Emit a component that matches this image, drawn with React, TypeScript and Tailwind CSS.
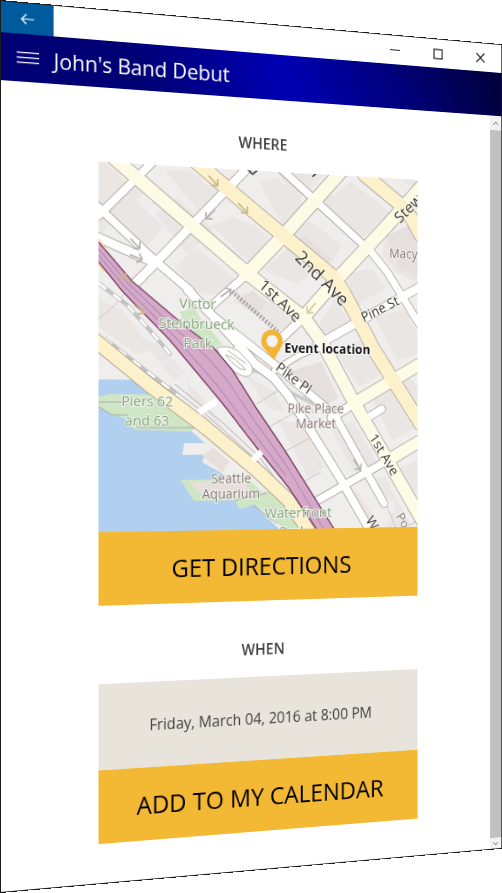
import React from "react";

type Road = { d: string; w: number; fill: string };

const WHITE = "#ffffff";
const PALE = "#fdfae6";
const YELLOW = "#fdf1cb";

const roads: Road[] = [
  { d: "M60 -5 L0 55", w: 8, fill: WHITE },
  { d: "M164 -4 L62 100 L38 124", w: 9, fill: WHITE },
  { d: "M-4 43 L62 100 L98 128 L110 143", w: 8, fill: WHITE },
  { d: "M-4 76 L58 100", w: 9, fill: WHITE },
  { d: "M96 128 L122 153 L153 184 L170 203", w: 9, fill: WHITE },
  { d: "M161 110 L122 144", w: 8, fill: WHITE },
  { d: "M202 -2 L305 81 L324 102 L362 157", w: 8, fill: WHITE },
  { d: "M242 182 L362 117", w: 9, fill: WHITE },
  { d: "M225 154 L196 180", w: 9, fill: WHITE },
  { d: "M122 153 L193 204 L262 257 L320 352", w: 8, fill: WHITE },
  { d: "M150 190 L170 203 L192 218 L208 236 L235 275 L268 324 L302 379", w: 9, fill: WHITE },
  { d: "M193 210 L222 193 L245 184", w: 6, fill: WHITE },
  { d: "M285 244 L258 260", w: 9, fill: WHITE },
  { d: "M296 262 L317 250", w: 8, fill: WHITE },
  { d: "M329 303 L273 332 L256 341", w: 8, fill: WHITE },
  { d: "M222 358 L256 341", w: 8, fill: WHITE },
  { d: "M364 8 L324 51 L262 114 L225 154", w: 14, fill: PALE },
  { d: "M270 -5 L204 66 L161 110", w: 14, fill: PALE },
  { d: "M364 200 L285 244", w: 13, fill: PALE },
  { d: "M364 284 L329 303", w: 13, fill: PALE },
  { d: "M12 -8 L164 110 L227 154 L247 179 L285 244 L326 308 L366 372", w: 14, fill: PALE },
  { d: "M296 -3 L341 29 L352 41 L364 60", w: 15, fill: YELLOW },
  { d: "M106 -5 L174 46 L262 110 L273 126 L300 172 L306 183 L364 266", w: 15, fill: YELLOW },
];

const blocks = [
  "M0 0 H6 L45 31 L0 75Z",
  "M34 12 L52 26 L28 50 L10 62Z",
  "M60 50 L84 32 L124 64 L96 92Z",
  "M12 62 L40 38 L70 64 L50 86Z",
  "M72 6 L100 4 L130 30 L112 50Z",
  "M116 10 L150 12 L128 34Z",
  "M146 50 L170 58 L192 74 L166 98 L122 60Z",
  "M176 12 L196 6 L228 34 L204 60Z",
  "M196 0 L250 0 L220 30Z",
  "M280 6 L330 38 L318 52 L290 66 L228 18 L262 22Z",
  "M232 50 L270 74 L258 96 L210 70Z",
  "M206 82 L236 104 L218 118 L180 104Z",
  "M82 104 L106 84 L150 116 L130 132 L104 130Z",
  "M160 128 L192 140 L216 160 L200 166 L146 138Z",
  "M10 112 L48 130 L76 158 L50 150Z",
  "M340 0 H360 V12Z",
  "M322 62 L360 50 V112 L336 102 L318 84Z",
  "M276 106 L304 98 L322 118 L286 140Z",
  "M310 152 L344 140 L360 168 V190 L336 198Z",
  "M244 160 L262 132 L286 166 L248 176Z",
  "M264 190 L292 176 L324 208 L290 226Z",
  "M204 214 L238 210 L266 238 L250 244Z",
  "M160 216 L192 232 L206 256 L186 250Z",
  "M196 262 L222 266 L250 312 L232 326Z",
  "M258 272 L284 264 L312 308 L284 318Z",
  "M306 238 L350 216 L360 224 V270 L330 284Z",
  "M340 314 L360 304 V344Z",
  "M300 330 L320 322 L352 376 L322 378 L334 352Z",
  "M272 344 L288 338 L316 378 L304 378Z",
  "M42 176 L64 186 L94 214 L80 222Z",
  "M0 140 L24 150 L58 190 L40 196 L0 168Z",
  "M94 222 L116 244 L136 272 L98 240Z",
];

const HIGHWAY_TOP = "M0 82 L36 121 L95 167 L125 188 L145 210 L172 250 L204 294 L262 380";
const HIGHWAY_LOW = "M0 102 L26 132 L76 180 L134 245 L172 291 L208 333 L242 380";

function Arrow({ x, y, r, c }: { x: number; y: number; r: number; c: string }) {
  return (
    <path
      d="M-7 0 H6 M2 -5 L7 0 L2 5"
      transform={`translate(${x} ${y}) rotate(${r})`}
      fill="none"
      stroke={c}
      strokeWidth="1.7"
    />
  );
}

function EventMap() {
  return (
    <svg
      viewBox="0 0 360 378"
      className="block w-full"
      role="img"
      aria-label="Map of the event location"
      fontFamily='"Open Sans", "Noto Sans", sans-serif'
    >
      <rect width="360" height="378" fill="#f0eeed" />
      <g fill="#eae6e4">
        {blocks.map((d) => (
          <path key={d} d={d} />
        ))}
      </g>
      <path d="M206 82 L228 66 L258 90 L238 104Z M322 62 L360 46 V104 L338 98Z M206 212 L246 200 L266 238 L252 246Z M168 126 L184 138 L172 152 L150 138Z" fill="#e5dfdd" />
      <path
        d="M0 160 Q20 146 30 130 M112 140 L98 156 M172 246 L206 226 M186 270 L228 248 M204 296 L232 282 M222 330 L246 318 M210 206 L238 256 M322 352 L334 379 M342 379 L360 372"
        fill="none"
        stroke="#c9c5c3"
      />

      {/* Water and piers */}
      <path
        d="M0 222 H42 L54 230 L98 273 L115 287 H92 L90 299 H115 L112 307 L133 318 L150 330 L174 355 L199 379 H0Z"
        fill="#b1cfef"
      />
      <path d="M0 240 L12 237 H72 L106 271 L98 275 L38 273 L30 262 L14 258 L0 250Z" fill="#cfe6c5" />
      <path d="M88 325 H165 L178 338 L204 337 L232 356 L240 379 H204 L186 362 L170 352 L153 356 L148 347 L103 347Z" fill="#cfe6c5" />
      <path d="M98 327 H158 L172 345 L110 340Z M112 300 L124 292 L142 306 L134 318Z" fill="#e6dfdc" />
      <path d="M0 245 H26 M0 250 L14 258 H30 L42 271 H104 M148 347 L184 340 M168 352 L196 372" fill="none" stroke="#a9aca9" />
      <path d="M87 151 L103 146 L112 160 L129 177 L134 184 L122 188 L95 167Z" fill="#cfe6c5" />

      {/* Railway */}
      <g fill="none">
        <path d="M0 124 L30 145 L54 170 L78 196 M6 180 L68 225 L86 238" stroke="#c2c2c2" strokeWidth="4.5" />
        <path d="M0 124 L30 145 L54 170 L78 196 M6 180 L68 225 L86 238" stroke="#ffffff" strokeWidth="2.5" strokeDasharray="10 9" />
        <path d="M76 228 L109 252 L134 272 L176 308 M82 226 L134 265 L176 302 L206 340" stroke="#b5b1af" />
        <path d="M156 208 L176 212 L204 230 L244 248" stroke="#cccccc" strokeWidth="4" />
      </g>

      {/* Streets */}
      <g fill="none" strokeLinejoin="round" strokeLinecap="round">
        {roads.map((r) => (
          <path key={r.d} d={r.d} stroke="#b3aca5" strokeWidth={r.w + 2} />
        ))}
        {roads.map((r) => (
          <path key={r.d} d={r.d} stroke={r.fill} strokeWidth={r.w} />
        ))}
        <path d="M128 188 Q136 183 152 190 L166 204 Q172 216 160 217 Q146 214 136 203Z" stroke="#b3aca5" fill="#ffffff" />
        <path d="M138 195 Q148 196 160 210 Q150 210 138 195Z M140 190 L160 203" stroke="#b3aca5" />
        <path d="M-4 182 L54 227 L112 268 L172 315 L208 347 L234 384" stroke="#b3a391" strokeWidth="16" />
        <path d="M-4 182 L54 227 L112 268 L172 315 L208 347 L234 384" stroke={YELLOW} strokeWidth="14" />
      </g>
      <path d="M145 128 L198 170" stroke="#a8a3a0" strokeWidth="5" strokeDasharray="2 2" />
      <path d="M148 127 L201 169" stroke="#eae6e4" />

      {/* Highway */}
      <path
        d="M0 82 L36 121 L95 167 L125 188 L145 210 L172 250 L204 294 L262 380 H242 L208 333 L172 291 L134 245 L76 180 L26 132 L0 102Z"
        fill="#d6a9c8"
      />
      <g fill="none" stroke="#7d4266">
        <path d={HIGHWAY_TOP} strokeWidth="1.4" />
        <path d={HIGHWAY_LOW} strokeWidth="1.4" />
      </g>
      <g fill="none" stroke="#b391b8" strokeWidth="1.3">
        <path d="M0 89 L30 122 L88 173 L116 196 L140 222 L172 266 L206 310 L250 380" />
        <path d="M0 95 L28 127 L82 177 L128 226 L172 280 L206 322" />
      </g>
      <path d="M0 79 L8 89 M0 104 L6 112" stroke="#f0cf95" strokeWidth="1.5" />
      <path d="M108 255 L128 243 M168 305 L178 296" stroke="#ffffff" strokeWidth="7" />

      <Arrow x={124} y={13} r={45} c="#c7b68a" />
      <Arrow x={157} y={40} r={45} c="#c7b68a" />
      <Arrow x={121} y={48} r={135} c="#b5b1ae" />
      <Arrow x={39} y={82} r={45} c="#b5b1ae" />
      <Arrow x={40} y={96} r={20} c="#b5b1ae" />
      <Arrow x={138} y={130} r={-35} c="#b5b1ae" />
      <Arrow x={29} y={119} r={212} c="#cdb287" />
      <Arrow x={43} y={149} r={38} c="#cdb287" />
      <Arrow x={235} y={143} r={130} c="#d3c8a2" />
      <Arrow x={288} y={310} r={55} c="#b5b1ae" />
      <path d="M162 -1 L168 4 L174 -1 M236 3 L242 -2" fill="none" stroke="#333333" strokeWidth="1.6" />

      {/* Place names */}
      <g fill="#84a07d" stroke="#f2f7ef" strokeWidth="2" paintOrder="stroke" textAnchor="middle" fontSize="15">
        <text x="107" y="147">Victor</text>
        <text x="106" y="168">Steinbrueck</text>
        <text x="107" y="188">Park</text>
        <text x="52" y="249">Piers 62</text>
        <text x="52" y="269">and 63</text>
        <text x="220" y="366">Waterfront</text>
        <text x="214" y="386">Park</text>
      </g>
      <g fill="#857b76" stroke="#f4f1ef" strokeWidth="2" paintOrder="stroke" textAnchor="middle" fontSize="14">
        <text x="144" y="329">Seattle</text>
        <text x="144" y="345">Aquarium</text>
        <text x="240" y="255">Pike Place</text>
        <text x="240" y="271">Market</text>
        <text x="326" y="86" textAnchor="start">Macy</text>
        <text transform="translate(334 366) rotate(60)" textAnchor="start">Po</text>
      </g>

      {/* Street names */}
      <g fill="#3a3835" stroke="#fffdf5" strokeWidth="1.5" paintOrder="stroke">
        <text transform="translate(215 91) rotate(42)" fontSize="20">2nd Ave</text>
        <text transform="translate(174 122) rotate(41)" fontSize="17">1st Ave</text>
        <text transform="translate(339 49) rotate(-44)" fontSize="17">Stewa</text>
        <text transform="translate(296 157) rotate(-26)" fontSize="15">Pine St</text>
        <text transform="translate(193 209) rotate(35)" fontSize="15">Pike Pl</text>
        <text transform="translate(302 281) rotate(57)" fontSize="15">1st Ave</text>
        <text transform="translate(298 370) rotate(57)" fontSize="15">W</text>
      </g>

      {/* Event pin */}
      <path
        d="M190 167 a12 12 0 0 1 11 17 L192 199 L180 186 a12 12 0 0 1 10 -19Z"
        fill="#f3b333"
      />
      <circle cx="190" cy="179" r="6.5" fill="#f5f3f0" />
      <text x="204" y="191" fontSize="14" fontWeight="700" fill="#111111" stroke="#ffffff" strokeWidth="2" paintOrder="stroke">
        Event location
      </text>
    </svg>
  );
}

function TitleBar() {
  const control = "flex h-full w-[52px] items-center justify-center";
  return (
    <div className="flex h-[31px] items-stretch justify-between bg-white">
      <button aria-label="Back" className="flex w-[54px] items-center justify-center bg-[#005a9e]">
        <svg width="14" height="12" viewBox="0 0 14 12" fill="none" stroke="#ffffff" strokeWidth="1.2">
          <path d="M14 6 H1 M6 1 L1 6 L6 11" />
        </svg>
      </button>
      <div className="flex">
        <button aria-label="Minimize" className={control}>
          <svg width="12" height="12" viewBox="0 0 12 12" stroke="#111111">
            <path d="M0 5.5 H12" />
          </svg>
        </button>
        <button aria-label="Maximize" className={control}>
          <svg width="12" height="12" viewBox="0 0 12 12" fill="none" stroke="#111111" strokeWidth="1.2">
            <rect x="1" y="1" width="10" height="10" />
          </svg>
        </button>
        <button aria-label="Close" className={control}>
          <svg width="12" height="12" viewBox="0 0 12 12" fill="none" stroke="#111111" strokeWidth="1.2">
            <path d="M1 1 L11 11 M11 1 L1 11" />
          </svg>
        </button>
      </div>
    </div>
  );
}

function AppHeader() {
  return (
    <header className="flex h-12 items-center bg-[linear-gradient(65deg,#000074_0%,#000074_26%,#0000b4_54%,#00007c_76%,#00003e_98%)]">
      <button aria-label="Menu" className="flex w-[54px] items-center justify-center">
        <svg width="23" height="12" viewBox="0 0 23 12" stroke="#ffffff" strokeWidth="1.2">
          <path d="M0 0.6 H23 M0 5.6 H23 M0 10.6 H23" />
        </svg>
      </button>
      <h1 className="text-[22px] leading-6 text-white">John's Band Debut</h1>
    </header>
  );
}

function ScrollBar() {
  return (
    <div className="flex w-[14px] flex-col bg-[#f1f1f1]">
      <button aria-label="Scroll up" className="flex h-4 items-center justify-center">
        <svg width="8" height="5" viewBox="0 0 8 5" fill="none" stroke="#666666">
          <path d="M1 4 L4 1 L7 4" />
        </svg>
      </button>
      <div className="grow bg-[#c1c1c1]" />
      <button aria-label="Scroll down" className="flex h-3 items-center justify-center">
        <svg width="8" height="5" viewBox="0 0 8 5" fill="none" stroke="#666666">
          <path d="M1 1 L4 4 L7 1" />
        </svg>
      </button>
    </div>
  );
}

function Heading({ children }: { children: React.ReactNode }) {
  return (
    <h2 className="mb-[17px] text-center text-[16px] leading-6 font-semibold text-[#404040]">{children}</h2>
  );
}

function ActionButton({ children }: { children: React.ReactNode }) {
  return (
    <button className="h-[75px] w-full bg-[#f3b935] text-[26px] leading-8 text-black">{children}</button>
  );
}

export default function App() {
  return (
    <div className="min-h-screen overflow-hidden bg-white font-['Open_Sans','Noto_Sans',sans-serif] [perspective:178vw] [perspective-origin:0_50%]">
      <div className="flex min-h-screen w-[112.7vw] origin-left [transform:rotateY(10deg)] flex-col border border-[#1a1a1a] bg-white">
        <TitleBar />
        <AppHeader />
        <div className="flex grow">
          <main className="flex grow flex-col items-center pt-[35px] pb-8 pl-3">
            <section className="w-[360px]">
              <Heading>WHERE</Heading>
              <EventMap />
              <ActionButton>GET DIRECTIONS</ActionButton>
            </section>
            <section className="mt-[39px] w-[360px]">
              <Heading>WHEN</Heading>
              <p className="flex h-[88px] items-center justify-center bg-[#e8e4dc] text-[16px] leading-6 text-[#404040]">
                Friday, March 04, 2016 at 8:00 PM
              </p>
              <ActionButton>ADD TO MY CALENDAR</ActionButton>
            </section>
          </main>
          <ScrollBar />
        </div>
      </div>
    </div>
  );
}
